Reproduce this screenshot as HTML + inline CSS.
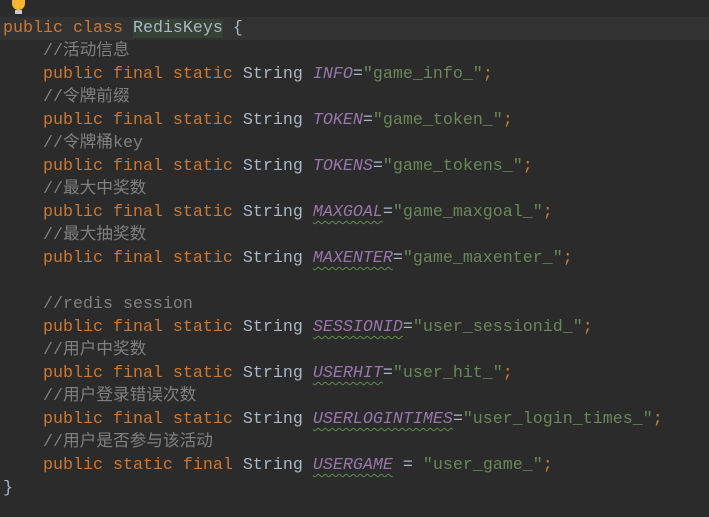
<!DOCTYPE html>
<html><head><style>
html,body{margin:0;padding:0;background:#2b2b2b;width:709px;height:517px;overflow:hidden}
.code{position:absolute;left:3px;top:17px;font-family:"Liberation Mono","Noto Sans CJK SC",monospace;font-size:16.67px;line-height:23px;color:#a9b7c6;white-space:pre}
.cur{position:absolute;left:0;top:17px;width:709px;height:23px;background:#323232}
.k{color:#cc7832}.c{color:#808080}.s{color:#6a8759}.v{color:#9876aa;font-style:italic}
.w{text-decoration:underline wavy #5f8a4f;text-decoration-thickness:1px;text-underline-offset:4px}
.cls{background:#344134}
.bulb{position:absolute;left:12px;top:0;width:13px;height:10px;background:#f5b731;border-radius:0 0 7px 7px}
.bulb2{position:absolute;left:15px;top:10px;width:7px;height:4px;background:#c9c9c9}
</style></head><body>
<div class="cur"></div>
<div class="bulb"></div><div class="bulb2"></div>
<div class="code"><span class="k">public class</span> <span class="cls">RedisKeys</span> {
    <span class="c">//活动信息</span>
    <span class="k">public final static</span> String <span class="v">INFO</span>=<span class="s">"game_info_"</span><span class="k">;</span>
    <span class="c">//令牌前缀</span>
    <span class="k">public final static</span> String <span class="v">TOKEN</span>=<span class="s">"game_token_"</span><span class="k">;</span>
    <span class="c">//令牌桶key</span>
    <span class="k">public final static</span> String <span class="v">TOKENS</span>=<span class="s">"game_tokens_"</span><span class="k">;</span>
    <span class="c">//最大中奖数</span>
    <span class="k">public final static</span> String <span class="v w">MAXGOAL</span>=<span class="s">"game_maxgoal_"</span><span class="k">;</span>
    <span class="c">//最大抽奖数</span>
    <span class="k">public final static</span> String <span class="v w">MAXENTER</span>=<span class="s">"game_maxenter_"</span><span class="k">;</span>

    <span class="c">//redis session</span>
    <span class="k">public final static</span> String <span class="v w">SESSIONID</span>=<span class="s">"user_sessionid_"</span><span class="k">;</span>
    <span class="c">//用户中奖数</span>
    <span class="k">public final static</span> String <span class="v w">USERHIT</span>=<span class="s">"user_hit_"</span><span class="k">;</span>
    <span class="c">//用户登录错误次数</span>
    <span class="k">public final static</span> String <span class="v w">USERLOGINTIMES</span>=<span class="s">"user_login_times_"</span><span class="k">;</span>
    <span class="c">//用户是否参与该活动</span>
    <span class="k">public static final</span> String <span class="v w">USERGAME</span> = <span class="s">"user_game_"</span><span class="k">;</span>
}</div>
</body></html>
